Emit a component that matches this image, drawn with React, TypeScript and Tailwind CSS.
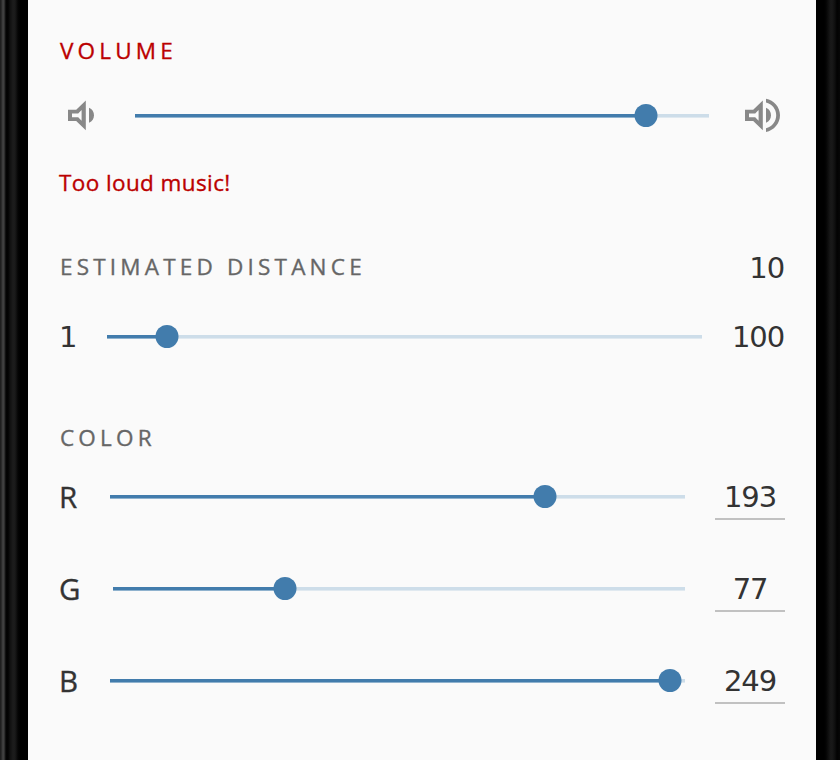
import React from "react";

const LABEL = "font-['Open_Sans','Noto_Sans',sans-serif] [-webkit-text-stroke:0.35px_currentColor]";
const HEADING = "pl-px text-[22.5px] leading-8 tracking-[4.2px]";
const DIGITS = "font-['DejaVu_Sans',sans-serif]";

function Speaker({ loud = false }: { loud?: boolean }) {
  return (
    <svg width="40" height="40" viewBox="0 0 40 40" fill="#888888" className="block shrink-0">
      <path
        fillRule="evenodd"
        d="M1 14.7H9.2L18.8 5.5V35.3L9.2 26H1ZM5 18.5V22.3H11.2L14.6 25.7V15.1L11.2 18.5Z"
      />
      <path d="M22 12.8C25.3 14.3 27 17.1 27 20.3S25.3 26.3 22 27.8Z" />
      {loud && <path d="M22 3.8C30 5.3 36 12.1 36 20.3S30 35.4 22 37.1V33.3C28 31.8 32.2 26.6 32.2 20.3S28 9 22 7.5Z" />}
    </svg>
  );
}

function Slider({ className, value }: { className: string; value: number }) {
  return (
    <div className={`relative flex h-8 shrink-0 items-center ${className}`}>
      <div className="h-1 border-b border-[#8fb2ce] bg-[#427cac]" style={{ width: value }} />
      <div className="h-1 flex-1 border-b border-[#e0e9f0] bg-[#cddde9]" />
      <div className="absolute top-[4.3px] size-[23px] -translate-x-1/2 rounded-full bg-[#427cac]" style={{ left: value }} />
    </div>
  );
}

function Num({ children, className = "" }: { children: React.ReactNode; className?: string }) {
  return (
    <span className={`block whitespace-nowrap text-[29px] leading-8 tracking-[-1.1px] text-[#333333] ${DIGITS} ${className}`}>
      {children}
    </span>
  );
}

function Channel({ name, gap, width, value, amount }: { name: string; gap: string; width: string; value: number; amount: number }) {
  return (
    <div className="flex h-[92px] items-start">
      <span className={`block h-8 shrink-0 text-[29.5px] leading-8 text-[#333333] ${LABEL} ${gap}`}>{name}</span>
      <Slider className={width} value={value} />
      <div className="ml-[30px] h-[39px] w-[70px] border-b-2 border-[#c1c1c1] text-center">
        <Num>{amount}</Num>
      </div>
    </div>
  );
}

export default function App() {
  return (
    <div className="flex h-[760px] w-[840px] overflow-hidden bg-black">
      <div className="w-7 shrink-0 bg-[linear-gradient(90deg,#1c1c1c_0px,#222_1px,#343434_2px,#444_3px,#3c3c3c_4px,#202020_5px,#040404_6px,#020202_8px,#101010_10px,#1c1c1c_13px,#1a1a1a_15px,#050505_18px,#000_20px)]" />
      <main className="flex w-[788px] shrink-0 flex-col bg-[#fafafa] pl-[31px] pr-[31px] pt-[35px]">
        <h2 className={`h-8 text-[#bb0000] ${HEADING} ${LABEL}`}>VOLUME</h2>
        <div className="mt-4 flex h-16 items-center">
          <div className="ml-2 w-[68px]"><Speaker /></div>
          <Slider className="mt-0.5 w-[574px]" value={510.5} />
          <div className="ml-[35px]"><Speaker loud /></div>
        </div>
        <p className={`mt-5 h-8 text-[22.5px] leading-8 tracking-[0.4px] text-[#bb0000] ${LABEL}`}>Too loud music!</p>
        <div className="mt-[52px] flex h-8 justify-between">
          <h2 className={`text-[#666666] ${HEADING} ${LABEL}`}>ESTIMATED DISTANCE</h2>
          <Num className="mr-px pt-px">10</Num>
        </div>
        <div className="mt-[37px] flex h-8">
          <Num className="w-12 pt-px">1</Num>
          <Slider className="mt-px w-[595px]" value={60} />
          <Num className="ml-auto mr-px pt-px">100</Num>
        </div>
        <h2 className={`mt-[70px] h-8 text-[#666666] ${HEADING} ${LABEL}`}>COLOR</h2>
        <section className="mt-[27px]">
          <Channel name="R" gap="w-[51px]" width="w-[575px]" value={434.5} amount={193} />
          <Channel name="G" gap="w-[53.5px]" width="w-[572.5px]" value={172.5} amount={77} />
          <Channel name="B" gap="w-[51px]" width="w-[575px]" value={560} amount={249} />
        </section>
      </main>
      <div className="w-6 shrink-0 bg-[linear-gradient(90deg,#000_0px,#000_8px,#040404_10px,#171717_14px,#191919_16px,#0e0e0e_19px,#020202_21px,#060606_24px)]" />
    </div>
  );
}
